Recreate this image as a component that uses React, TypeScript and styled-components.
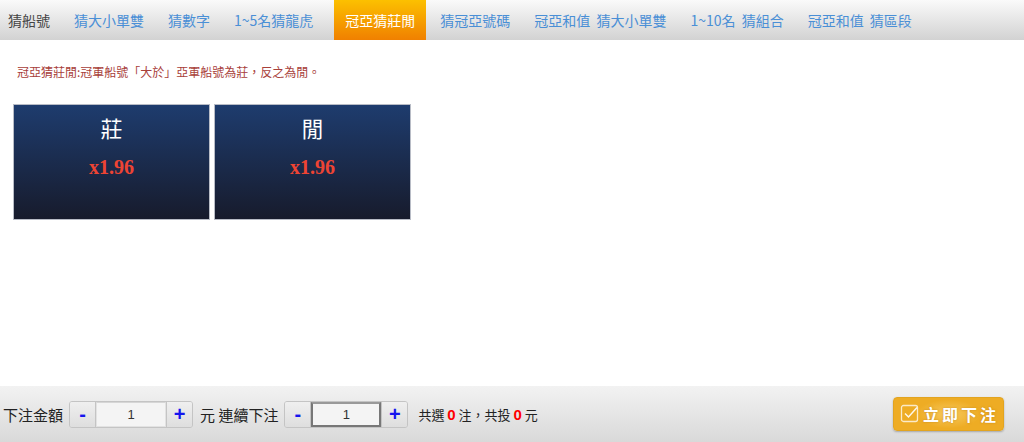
import React from "react";
import styled, { createGlobalStyle } from "styled-components";

const GlobalStyle = createGlobalStyle`
  html, body {
    margin: 0;
    padding: 0;
    background: #fff;
  }
  body {
    font-family: "Noto Sans CJK TC", "Noto Sans", sans-serif;
  }
`;

const Page = styled.div`
  width: 1024px;
  height: 442px;
  display: flex;
  flex-direction: column;
  overflow: hidden;
`;

const TabBar = styled.div`
  height: 40px;
  display: flex;
  align-items: stretch;
  background: linear-gradient(#fafafa, #d2d2d2);
`;

const Tab = styled.div<{ $active?: boolean; $first?: boolean }>`
  display: flex;
  align-items: center;
  padding: 0 ${(p) => (p.$active ? "11px" : "12px")};
  padding-left: ${(p) => (p.$first ? "8px" : p.$active ? "11px" : "12px")};
  margin: ${(p) => (p.$active ? "0 2px 0 9px" : "0")};
  font-size: 14px;
  word-spacing: 3px;
  white-space: nowrap;
  color: ${(p) => (p.$active ? "#fff" : p.$first ? "#444" : "#4a8fd6")};
  background: ${(p) =>
    p.$active ? "linear-gradient(#fcc000, #f08000)" : "transparent"};
`;

const Content = styled.div`
  flex: 1;
  padding: 24px 13px 0;
`;

const Rule = styled.div`
  padding-left: 4px;
  font-size: 12px;
  color: #a8403a;
  line-height: 16px;
`;

const CardRow = styled.div`
  display: flex;
  gap: 4px;
  margin-top: 24px;
`;

const Card = styled.div`
  width: 195px;
  height: 114px;
  border: 1px solid #b8bcc6;
  background: linear-gradient(#1e3c6e, #171b2c);
  display: flex;
  flex-direction: column;
  align-items: center;
`;

const CardTitle = styled.div`
  margin-top: 7px;
  font-size: 22px;
  line-height: 30px;
  color: #fff;
`;

const Odds = styled.div`
  margin-top: 14px;
  font-family: "Liberation Serif", serif;
  font-weight: bold;
  font-size: 20px;
  color: #ee4433;
`;

const Footer = styled.div`
  height: 56px;
  display: flex;
  align-items: center;
  padding: 0 20px 0 3px;
  background: linear-gradient(#f2f2f2, #d9d9d9);
  font-size: 15px;
  color: #222;
`;

const Label = styled.span`
  margin-right: 6px;
`;

const Stepper = styled.div`
  display: flex;
  height: 25px;
  border: 1px solid #c4c4c4;
  border-radius: 3px;
  margin-right: 7px;
  overflow: hidden;
`;

const StepButton = styled.div`
  width: 25px;
  display: flex;
  align-items: center;
  justify-content: center;
  background: linear-gradient(#efefef, #dedede);
  color: #1515ee;
  font-family: "Liberation Sans", sans-serif;
  font-weight: bold;
  font-size: 20px;
  &:first-child {
    border-right: 1px solid #c4c4c4;
  }
  &:last-child {
    border-left: 1px solid #c4c4c4;
  }
`;

const StepInput = styled.div<{ $focus?: boolean }>`
  width: 70px;
  box-sizing: border-box;
  display: flex;
  align-items: center;
  justify-content: center;
  background: #f4f4f4;
  font-family: "Liberation Sans", sans-serif;
  font-size: 13px;
  color: #333;
  border: ${(p) => (p.$focus ? "2px solid #777" : "1px solid #e2e2e2")};
  border-top-color: ${(p) => (p.$focus ? "#999" : "#d6d6d6")};
`;

const Summary = styled.span`
  margin-left: 3px;
  flex: 1;
  font-size: 13px;
`;

const Red = styled.b`
  color: #ff0000;
  font-family: "Liberation Sans", sans-serif;
  font-size: 15px;
`;

const SubmitButton = styled.div`
  width: 111px;
  height: 34px;
  box-sizing: border-box;
  display: flex;
  align-items: center;
  justify-content: center;
  gap: 3px;
  padding-left: 2px;
  border-radius: 4px;
  border: 1px solid #e2a420;
  background: radial-gradient(ellipse 40px 18px at 50% 50%, #f7c95e, #eeac24 80%);
  box-shadow: 0 1px 2px rgba(0, 0, 0, 0.25);
  color: #fff;
  font-weight: bold;
  font-size: 16px;
  letter-spacing: 3px;
  text-shadow: 0 0 2px rgba(150, 90, 0, 0.5);
`;

const tabs = [
  "猜船號",
  "猜大小單雙",
  "猜數字",
  "1~5名猜龍虎",
  "冠亞猜莊閒",
  "猜冠亞號碼",
  "冠亞和值 猜大小單雙",
  "1~10名 猜組合",
  "冠亞和值 猜區段",
];

const CheckIcon = () => (
  <svg width="20" height="20" viewBox="0 0 20 20" fill="none">
    <rect x="1.5" y="1.5" width="16" height="16" rx="2" stroke="#fff" strokeWidth="1.3" opacity="0.75" />
    <path d="M5 9.5 L8.5 13 L17 3.5" stroke="#fff" strokeWidth="1.5" fill="none" opacity="0.9" />
  </svg>
);

const App = () => {
  return (
    <Page>
      <GlobalStyle />
      <TabBar>
        {tabs.map((t, i) => (
          <Tab key={t} $first={i === 0} $active={i === 4}>
            {t}
          </Tab>
        ))}
      </TabBar>
      <Content>
        <Rule>冠亞猜莊閒:冠軍船號「大於」亞軍船號為莊，反之為閒。</Rule>
        <CardRow>
          <Card>
            <CardTitle>莊</CardTitle>
            <Odds>x1.96</Odds>
          </Card>
          <Card>
            <CardTitle>閒</CardTitle>
            <Odds>x1.96</Odds>
          </Card>
        </CardRow>
      </Content>
      <Footer>
        <Label>下注金額</Label>
        <Stepper>
          <StepButton>-</StepButton>
          <StepInput>1</StepInput>
          <StepButton>+</StepButton>
        </Stepper>
        <Label>元 連續下注</Label>
        <Stepper>
          <StepButton>-</StepButton>
          <StepInput $focus>1</StepInput>
          <StepButton>+</StepButton>
        </Stepper>
        <Summary>
          共選 <Red>0</Red> 注，共投 <Red>0</Red> 元
        </Summary>
        <SubmitButton>
          <CheckIcon />
          立即下注
        </SubmitButton>
      </Footer>
    </Page>
  );
};

export default App;
